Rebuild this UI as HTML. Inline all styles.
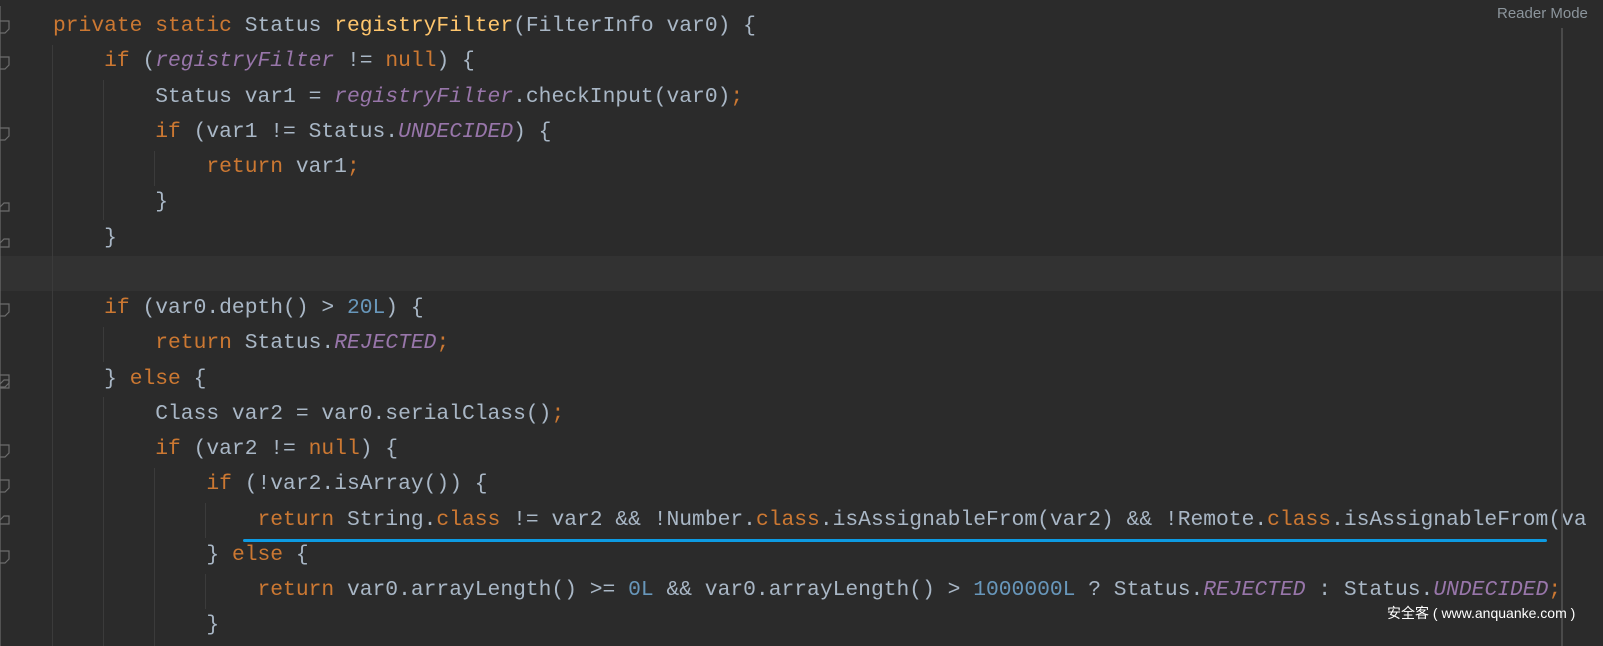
<!DOCTYPE html>
<html><head><meta charset="utf-8"><style>
body{margin:0;width:1603px;height:646px;background:#2b2b2b;overflow:hidden;position:relative;font-family:"Liberation Mono",monospace;}
.hl{position:absolute;left:0;top:256px;width:1603px;height:35px;background:#323232;}
.code{position:absolute;left:53px;top:9px;font-size:21.3px;line-height:35.25px;color:#a9b7c6;white-space:pre;}
.k{color:#cc7832}.p{color:#9876aa;font-style:italic}.m{color:#ffc66d}.n{color:#6897bb}
.g{position:absolute;width:1px;background:#3b3b3b;}
.rm{position:absolute;left:1497px;top:5px;font-family:"Liberation Sans",sans-serif;font-size:15px;color:#8c959c;}
.vl{position:absolute;left:1561px;top:28px;width:2px;height:618px;background:#4a4a4a;}
.ul{position:absolute;left:243px;top:539px;width:1304px;height:3px;background:#0d9be3;border-radius:2px;}
.wm{position:absolute;left:1387px;top:603px;font-family:"Liberation Sans","Noto Sans CJK SC",sans-serif;font-size:14px;color:#fff;}
</style></head><body>
<div class="hl"></div>
<div class="g" style="left:52px;top:45px;height:601px"></div>
<div class="g" style="left:103px;top:80px;height:140px"></div>
<div class="g" style="left:103px;top:327px;height:35px"></div>
<div class="g" style="left:103px;top:397px;height:249px"></div>
<div class="g" style="left:154px;top:151px;height:35px"></div>
<div class="g" style="left:154px;top:468px;height:178px"></div>
<div class="g" style="left:205px;top:503px;height:35px"></div>
<div class="g" style="left:205px;top:574px;height:35px"></div>
<svg style="position:absolute;left:0;top:0" width="12" height="646">
<g fill="none" stroke="#6d6d6d" stroke-width="1.2">
<path d="M0 21h9v8l-4 4h-5"/><path d="M0 57h9v8l-4 4h-5"/><path d="M0 128h9v8l-4 4h-5"/>
<path d="M0 207l4-4h5v8h-9"/><path d="M0 243l4-4h5v8h-9"/>
<path d="M0 304h9v8l-4 4h-5"/><path d="M0 384l4-4h5v8h-9"/><path d="M0 375h9v8l-4 4h-5"/>
<path d="M0 445h9v8l-4 4h-5"/><path d="M0 480h9v8l-4 4h-5"/><path d="M0 520l4-4h5v8h-9"/><path d="M0 551h9v8l-4 4h-5"/>
<path d="M0 6v640"/>
</g></svg>
<div class="code"><span class="k">private static </span>Status <span class="m">registryFilter</span>(FilterInfo var0) {
    <span class="k">if </span>(<span class="p">registryFilter</span> != <span class="k">null</span>) {
        Status var1 = <span class="p">registryFilter</span>.checkInput(var0)<span class="k">;</span>
        <span class="k">if </span>(var1 != Status.<span class="p">UNDECIDED</span>) {
            <span class="k">return </span>var1<span class="k">;</span>
        }
    }

    <span class="k">if </span>(var0.depth() > <span class="n">20L</span>) {
        <span class="k">return </span>Status.<span class="p">REJECTED</span><span class="k">;</span>
    } <span class="k">else </span>{
        Class var2 = var0.serialClass()<span class="k">;</span>
        <span class="k">if </span>(var2 != <span class="k">null</span>) {
            <span class="k">if </span>(!var2.isArray()) {
                <span class="k">return </span>String.<span class="k">class </span>!= var2 && !Number.<span class="k">class</span>.isAssignableFrom(var2) && !Remote.<span class="k">class</span>.isAssignableFrom(va
            } <span class="k">else </span>{
                <span class="k">return </span>var0.arrayLength() >= <span class="n">0L</span> && var0.arrayLength() > <span class="n">1000000L</span> ? Status.<span class="p">REJECTED</span> : Status.<span class="p">UNDECIDED</span><span class="k">;</span>
            }</div>
<div class="ul"></div>
<div class="vl"></div>
<div class="rm">Reader Mode</div>
<div class="wm">安全客 ( www.anquanke.com )</div>
</body></html>
